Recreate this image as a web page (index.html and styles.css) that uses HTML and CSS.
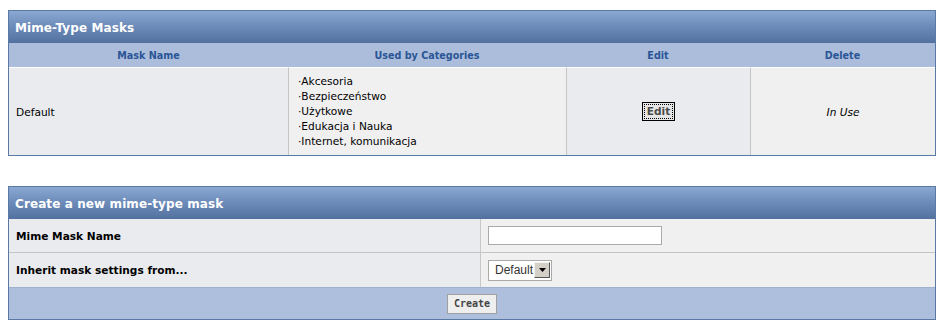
FILE: index.html
```html
<!DOCTYPE html>
<html>
<head>
<meta charset="utf-8">
<link rel="stylesheet" href="styles.css">
<title>Mime-Type Masks</title>
</head>
<body>
<table class="tborder masks">
  <colgroup><col class="c1"><col class="c2"><col class="c3"><col class="c4"></colgroup>
  <tr><td class="tcat" colspan="4">Mime-Type Masks</td></tr>
  <tr class="thead">
    <td>Mask Name</td>
    <td>Used by Categories</td>
    <td>Edit</td>
    <td>Delete</td>
  </tr>
  <tr class="body">
    <td class="alt1">Default</td>
    <td class="alt2 cats">
      <div>·Akcesoria</div>
      <div>·Bezpieczeństwo</div>
      <div>·Użytkowe</div>
      <div>·Edukacja i Nauka</div>
      <div>·Internet, komunikacja</div>
    </td>
    <td class="alt1 center"><button class="editbtn"><span>Edit</span></button></td>
    <td class="alt2 center"><i>In Use</i></td>
  </tr>
</table>

<table class="tborder create">
  <colgroup><col class="h1"><col class="h2"></colgroup>
  <tr><td class="tcat" colspan="2">Create a new mime-type mask</td></tr>
  <tr class="row r1">
    <td class="alt1 label">Mime Mask Name</td>
    <td class="alt2"><input class="textin" type="text"></td>
  </tr>
  <tr class="row r2">
    <td class="alt1 label">Inherit mask settings from...</td>
    <td class="alt2"><span class="select"><span class="selval">Default</span><span class="selbtn"><svg width="7" height="4" viewBox="0 0 7 4"><path d="M0 0h7L3.5 4z" fill="#000"/></svg></span></span></td>
  </tr>
  <tr class="tfoot"><td colspan="2"><button class="createbtn">Create</button></td></tr>
</table>
</body>
</html>
```
FILE: styles.css
```css
html, body { background: #fff; }
body {
  margin: 10px 0 0 8px;
  font-family: "DejaVu Sans", Verdana, sans-serif;
  font-size: 10.6px;
  color: #000;
}
.tborder {
  width: 928px;
  border: 1px solid #5b79a5;
  border-collapse: separate;
  border-spacing: 0;
  table-layout: fixed;
}
.tborder td { padding: 0; }
.c1 { width: 279px; }
.c2 { width: 278px; }
.c3 { width: 184px; }
.c4 { width: 185px; }
.h1 { width: 471px; }
.h2 { width: 455px; }

.tcat {
  height: 32px;
  background: linear-gradient(#8ba8d2, #6e8dbb 45%, #52719f);
  color: #fff;
  font-weight: bold;
  font-size: 12px;
  padding: 1px 0 0 6px !important;
  letter-spacing: 0.1px;
  box-sizing: border-box;
}
.thead td {
  height: 24px;
  background: #abbdda;
  color: #2a5596;
  font-weight: bold;
  font-size: 9.6px;
  text-align: center;
}
.body td {
  height: 87px;
  border-top: 1px solid #fff;
  vertical-align: middle;
}
.alt1 { background: #e9ebee; }
.alt2 { background: #f0f0f0; }
.body td + td { border-left: 1px solid #c5c5c5; }
.body td:first-child { padding-left: 7px; }
.cats { padding-left: 9px !important; line-height: 15px; }
.center { text-align: center; }
.center i { font-size: 10.6px; }

.editbtn {
  font-family: "DejaVu Sans", Verdana, sans-serif;
  font-weight: bold;
  font-size: 10.6px;
  color: #4a4a4a;
  background: #e6e6e6;
  border: 1px solid #000;
  padding: 1px;
  width: 33px;
  height: 19px;
  line-height: 13px;
  margin: 0;
}
.editbtn span {
  display: block;
  border: 1px dotted #000;
  padding: 0 1px;
}

.create { margin-top: 30px; }
.row td { vertical-align: middle; }
.r1 td { height: 33px; }
.r2 td { height: 34px; border-top: 1px solid #c4c4c4; }
.row td + td { border-left: 1px solid #c8c8c8; padding-left: 7px; }
.label { font-weight: bold; padding-left: 7px !important; }
.textin {
  display: block;
  box-sizing: border-box;
  width: 174px;
  height: 19px;
  border: 1px solid #aaa;
  background: #fff;
  margin: 0;
  padding: 0;
}
.select {
  display: inline-flex;
  align-items: center;
  box-sizing: border-box;
  width: 64px;
  height: 21px;
  border: 1px solid #a9a9a9;
  background: #fff;
  padding: 0 1px 0 6px;
  font-family: "Liberation Sans", Arial, sans-serif;
  font-size: 12px;
  color: #333;
  vertical-align: middle;
}
.selval { flex: 1; }
.selbtn {
  box-sizing: border-box;
  width: 16px;
  height: 16px;
  background: #d4d0c8;
  border: 1px solid;
  border-color: #f4f2ee #555 #555 #f4f2ee;
  display: flex;
  align-items: center;
  justify-content: center;
}
.tfoot td {
  height: 31px;
  background: #adbfdc;
  border-top: 1px solid #9fb1cd;
  text-align: center;
  vertical-align: middle;
}
.createbtn {
  font-family: "DejaVu Sans Mono", monospace;
  font-weight: bold;
  font-size: 10px;
  color: #444;
  background: #eeeeee;
  border: 1px solid #a0a0a0;
  width: 50px;
  height: 20px;
  padding: 0;
  margin: 0;
}
```
